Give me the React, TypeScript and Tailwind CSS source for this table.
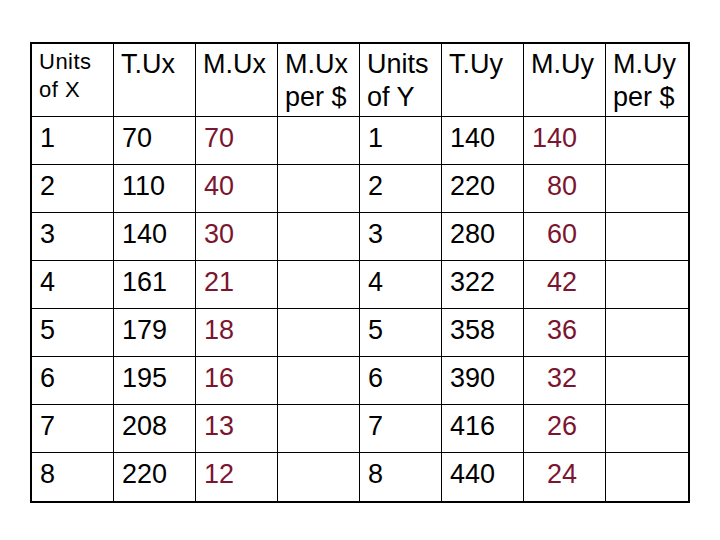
type Row = {
  x: number;
  tux: number;
  mux: number;
  y: number;
  tuy: number;
  muy: number;
};

const rows: Row[] = [
  { x: 1, tux: 70, mux: 70, y: 1, tuy: 140, muy: 140 },
  { x: 2, tux: 110, mux: 40, y: 2, tuy: 220, muy: 80 },
  { x: 3, tux: 140, mux: 30, y: 3, tuy: 280, muy: 60 },
  { x: 4, tux: 161, mux: 21, y: 4, tuy: 322, muy: 42 },
  { x: 5, tux: 179, mux: 18, y: 5, tuy: 358, muy: 36 },
  { x: 6, tux: 195, mux: 16, y: 6, tuy: 390, muy: 32 },
  { x: 7, tux: 208, mux: 13, y: 7, tuy: 416, muy: 26 },
  { x: 8, tux: 220, mux: 12, y: 8, tuy: 440, muy: 24 },
];

const headers = [
  ["T.Ux"],
  ["M.Ux"],
  ["M.Ux", "per $"],
  ["Units", "of Y"],
  ["T.Uy"],
  ["M.Uy"],
  ["M.Uy", "per $"],
];

const Cell = ({
  children,
  last,
  bottom,
  red,
}: {
  children?: React.ReactNode;
  last?: boolean;
  bottom?: boolean;
  red?: boolean;
}) => (
  <div
    className={`h-[48px] pl-2 text-[27px] leading-[42px] border-black ${
      last ? "" : "border-r"
    } ${bottom ? "" : "border-b"} ${red ? "text-[#7b1530]" : "text-black"}`}
  >
    {children}
  </div>
);

export default function App() {
  return (
    <div
      className="w-[720px] h-[540px] bg-white pt-[42px]"
      style={{ fontFamily: '"Liberation Sans", Arial, sans-serif' }}
    >
      <div className="mx-auto w-[660px] border-2 border-black grid grid-cols-8">
        {/* header row */}
        <div className="h-[73px] border-r border-b border-black pl-[7px] pt-[4px] text-[22px] leading-[28px] tracking-[0.5px]">
          <div>Units</div>
          <div>of X</div>
        </div>
        {headers.map((h, i) => (
          <div
            key={i}
            className={`h-[73px] border-b border-black pl-[7px] pt-[4px] text-[27px] leading-[33px] ${
              i === headers.length - 1 ? "" : "border-r"
            }`}
          >
            {h.map((line) => (
              <div key={line}>{line}</div>
            ))}
          </div>
        ))}

        {rows.map((r, i) => {
          const bottom = i === rows.length - 1;
          return [
            <Cell key={`a${i}`} bottom={bottom}>{r.x}</Cell>,
            <Cell key={`b${i}`} bottom={bottom}>{r.tux}</Cell>,
            <Cell key={`c${i}`} bottom={bottom} red>{r.mux}</Cell>,
            <Cell key={`d${i}`} bottom={bottom} />,
            <Cell key={`e${i}`} bottom={bottom}>{r.y}</Cell>,
            <Cell key={`f${i}`} bottom={bottom}>{r.tuy}</Cell>,
            <Cell key={`g${i}`} bottom={bottom} red>
              <span className="inline-block w-[45px] text-right">{r.muy}</span>
            </Cell>,
            <Cell key={`h${i}`} bottom={bottom} last />,
          ];
        })}
      </div>
    </div>
  );
}
